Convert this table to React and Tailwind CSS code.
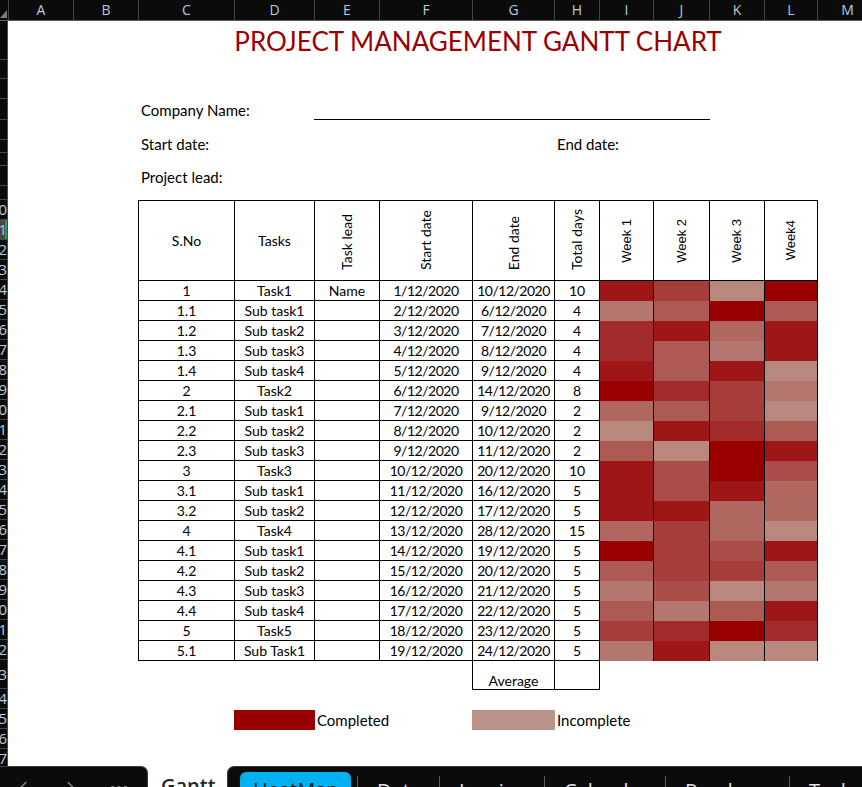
import { ChevronLeft, ChevronRight, MoreHorizontal } from "lucide-react";

const HEAD_COLS = [
	["A", 65],
	["B", 65],
	["C", 96],
	["D", 80],
	["E", 65],
	["F", 93],
	["G", 82],
	["H", 45],
	["I", 54],
	["J", 56],
	["K", 55],
	["L", 53],
	["M", 60],
];

// row number, height in px
const SHEET_ROWS = [
	[1, 39], [2, 19], [3, 20], [4, 21], [5, 20], [6, 13], [7, 13], [8, 20], [9, 14],
	[10, 20], [11, 20], [12, 20], [13, 20],
	[14, 20], [15, 20], [16, 20], [17, 20], [18, 20], [19, 20], [20, 20], [21, 20],
	[22, 20], [23, 20], [24, 20], [25, 20], [26, 20], [27, 20], [28, 20], [29, 20],
	[30, 20], [31, 20], [32, 20],
	[33, 29], [34, 20], [35, 20], [36, 20], [37, 20],
];

const SHADE = {
	a: "bg-[#990000]",
	b: "bg-[#9f1616]",
	c: "bg-[#a32a2a]",
	d: "bg-[#a73d3b]",
	e: "bg-[#aa4c48]",
	f: "bg-[#ad5a54]",
	g: "bg-[#b0675f]",
	h: "bg-[#b47770]",
	i: "bg-[#b8877e]",
};

const TASKS = [
	["1", "Task1", "Name", "1/12/2020", "10/12/2020", "10", "bdia"],
	["1.1", "Sub task1", "", "2/12/2020", "6/12/2020", "4", "hfaf"],
	["1.2", "Sub task2", "", "3/12/2020", "7/12/2020", "4", "cbgb"],
	["1.3", "Sub task3", "", "4/12/2020", "8/12/2020", "4", "cfhb"],
	["1.4", "Sub task4", "", "5/12/2020", "9/12/2020", "4", "bfbi"],
	["2", "Task2", "", "6/12/2020", "14/12/2020", "8", "acdh"],
	["2.1", "Sub task1", "", "7/12/2020", "9/12/2020", "2", "gfdi"],
	["2.2", "Sub task2", "", "8/12/2020", "10/12/2020", "2", "ibcf"],
	["2.3", "Sub task3", "", "9/12/2020", "11/12/2020", "2", "fiab"],
	["3", "Task3", "", "10/12/2020", "20/12/2020", "10", "beae"],
	["3.1", "Sub task1", "", "11/12/2020", "16/12/2020", "5", "bebg"],
	["3.2", "Sub task2", "", "12/12/2020", "17/12/2020", "5", "bbgg"],
	["4", "Task4", "", "13/12/2020", "28/12/2020", "15", "gdgi"],
	["4.1", "Sub task1", "", "14/12/2020", "19/12/2020", "5", "adeb"],
	["4.2", "Sub task2", "", "15/12/2020", "20/12/2020", "5", "fddf"],
	["4.3", "Sub task3", "", "16/12/2020", "21/12/2020", "5", "heih"],
	["4.4", "Sub task4", "", "17/12/2020", "22/12/2020", "5", "fhfb"],
	["5", "Task5", "", "18/12/2020", "23/12/2020", "5", "dcac"],
	["5.1", "Sub Task1", "", "19/12/2020", "24/12/2020", "5", "hbii"],
];

const TABS = [
	["Data", 82],
	["Invoice", 105],
	["Calendar", 121],
	["Roadmap", 124],
	["Tasks", 90],
];

export default function App() {
	return (
		<div className="flex h-[787px] w-[862px] flex-col overflow-hidden bg-white font-['Lato',sans-serif] text-black">
			<ColumnHeader />
			<div className="flex min-h-0 flex-1">
				<RowHeader />
				<Sheet />
			</div>
			<SheetTabs />
		</div>
	);
}

const ColumnHeader = () => {
	return (
		<div className="flex h-[21px] shrink-0 border-b border-[#5e5e5e] bg-[#0b0b0b] font-['Open_Sans',sans-serif] text-[14px] leading-[20px] text-[#b9cade]">
			<div className="flex w-[8px] shrink-0 items-end">
				<svg width="8" height="20" viewBox="0 0 8 20">
					<polygon points="7,10 7,18 0,18" fill="#7a7a7a" />
				</svg>
			</div>
			{HEAD_COLS.map(([name, w]) => (
				<div
					key={name}
					style={{ width: w }}
					className="shrink-0 border-l border-[#454545] text-center"
				>
					{name}
				</div>
			))}
		</div>
	);
};

const RowHeader = () => {
	return (
		<div className="flex w-[8px] shrink-0 flex-col overflow-hidden border-r border-[#4a4a4a] bg-[#0b0b0b] font-['Open_Sans',sans-serif] text-[15px] text-[#b9cade]">
			{SHEET_ROWS.map(([n, h]) => (
				<div
					key={n}
					style={{ height: h }}
					className={
						"flex shrink-0 items-center justify-end border-b border-[#4a4a4a] " +
						(n === 11 ? "bg-[#474747] shadow-[inset_-2px_0_0_#21a366]" : "")
					}
				>
					{n >= 10 && <span className="whitespace-nowrap leading-none">{n}</span>}
				</div>
			))}
		</div>
	);
};

const Sheet = () => {
	return (
		<div className="min-w-0 flex-1 overflow-hidden pl-[130px]">
			<div className="h-[39px] w-[680px] pt-[1px] text-center text-[26px] text-[#9b0000]">
				PROJECT MANAGEMENT GANTT CHART
			</div>

			<div className="h-[39px]" />
			<div className="flex h-[21px] items-end text-[15px] leading-[20px]">
				<div className="w-[176px] pl-[3px]">Company Name:</div>
				<div className="h-full w-[396px] border-b border-black" />
			</div>

			<div className="mt-[14px] flex h-[20px] text-[15px] leading-[20px]">
				<div className="w-[416px] pl-[3px]">Start date:</div>
				<div className="pl-[3px]">End date:</div>
			</div>

			<div className="mt-[13px] h-[20px] pl-[3px] text-[15px] leading-[20px]">Project lead:</div>

			<div className="mt-[13px]">
				<GanttTable />
			</div>

			<div className="flex h-[29px]">
				<div className="w-[334px]" />
				<div className="flex w-[83px] items-end justify-center border-x border-b border-black text-[14px] leading-[17px]">
					Average
				</div>
				<div className="w-[45px] border-r border-b border-black" />
			</div>

			<div className="mt-[20px] flex h-[20px] text-[15px] leading-[20px]">
				<div className="w-[96px]" />
				<div className="w-[81px] bg-[#990000]" />
				<div className="w-[157px] pl-[2px]">Completed</div>
				<div className="w-[83px] bg-[#bb928a]" />
				<div className="pl-[2px]">Incomplete</div>
			</div>
		</div>
	);
};

const GanttTable = () => {
	const vhead = "flex h-[80px] items-end justify-center border-r border-b border-black pb-[10px] text-[14px]";
	const week = "flex h-[80px] items-center justify-center border-r border-b border-black font-['Liberation_Sans',sans-serif] text-[13px]";
	const rot = "[writing-mode:vertical-rl] rotate-180 leading-[18px] whitespace-nowrap";

	return (
		<div className="grid w-fit grid-cols-[96px_80px_65px_93px_82px_45px_54px_56px_55px_53px] border-l border-t border-black">
			<div className="flex h-[80px] items-center justify-center border-r border-b border-black text-[14px]">S.No</div>
			<div className="flex h-[80px] items-center justify-center border-r border-b border-black text-[14px]">Tasks</div>
			<div className={vhead}><span className={rot}>Task lead</span></div>
			<div className={vhead}><span className={rot}>Start date</span></div>
			<div className={vhead}><span className={rot}>End date</span></div>
			<div className={vhead}><span className={rot}>Total days</span></div>
			<div className={week}><span className={rot}>Week 1</span></div>
			<div className={week}><span className={rot}>Week 2</span></div>
			<div className={week}><span className={rot}>Week 3</span></div>
			<div className={week}><span className={rot}>Week4</span></div>

			{TASKS.map(([no, task, lead, start, end, days, shades]) => (
				<TaskRow
					key={no}
					values={[no, task, lead, start, end, days]}
					shades={shades}
				/>
			))}
		</div>
	);
};

const TaskRow = ({ values, shades }) => {
	return (
		<>
			{values.map((v, i) => (
				<div
					key={i}
					className={
						"flex h-[20px] items-end justify-center whitespace-nowrap border-r border-b border-black text-[14px] leading-[18px] " +
						(i === 3 || i === 4 ? "tracking-[-0.5px]" : "")
					}
				>
					{v}
				</div>
			))}
			{shades.split("").map((s, i) => (
				<div key={"w" + i} className={"h-[20px] border-r border-black " + SHADE[s]} />
			))}
		</>
	);
};

const SheetTabs = () => {
	return (
		<div className="flex h-[21px] shrink-0 overflow-hidden bg-white font-['Open_Sans',sans-serif] text-[20px] leading-[20px]">
			<div className="flex w-[148px] shrink-0 items-start gap-[26px] rounded-tr-[7px] border-t border-r border-[#3c3c3c] bg-[#0b0b0b] pl-[12px] pt-[10px] text-[#8c8c8c]">
				<ChevronLeft size={22} strokeWidth={1.5} />
				<ChevronRight size={22} strokeWidth={1.5} />
				<MoreHorizontal size={22} strokeWidth={2.5} />
			</div>
			<div className="w-[79px] shrink-0 pl-[13px] pt-[10px] font-semibold text-[#262626]">Gantt</div>
			<div className="flex flex-1 rounded-tl-[7px] border-t border-l border-[#3c3c3c] bg-[#0b0b0b] pl-[12px] pt-[5px]">
				<div className="w-[111px] shrink-0 rounded-t-[6px] bg-[#00b0f0] pl-[13px] pt-[8px] text-[#1a1a1a]">HeatMap</div>
				<div className="w-[6px] shrink-0" />
				{TABS.map(([name, w]) => (
					<div
						key={name}
						style={{ width: w }}
						className="mt-[4px] shrink-0 border-l border-[#5a5a5a] pl-[19px] pt-[5px] text-[#e2e2e2]"
					>
						{name}
					</div>
				))}
			</div>
		</div>
	);
};
